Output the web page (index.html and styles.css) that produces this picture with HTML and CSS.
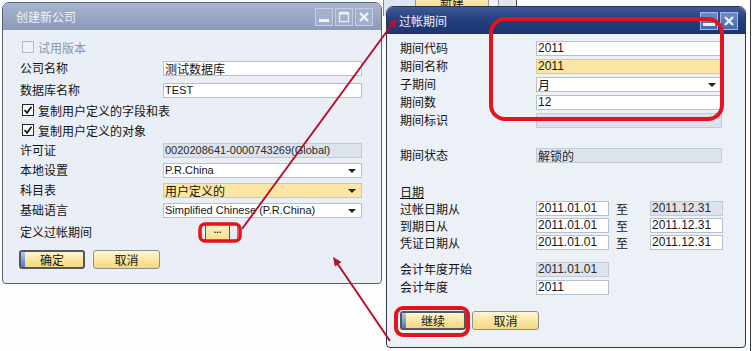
FILE: index.html
```html
<!DOCTYPE html>
<html lang="zh-CN">
<head>
<meta charset="utf-8">
<title>创建新公司 / 过帐期间</title>
<link rel="stylesheet" href="styles.css">
</head>
<body>
<div class="bgwin">
  <div class="bg-btn">新建</div>
  <div class="bg-cell"></div>
</div>
<div class="edge"></div>

<div class="win win-a">
  <div class="tb tb-inactive">
    <span class="tb-title">创建新公司</span>
    <div class="tb-ctrls">
      <span class="cbtn"><svg width="16" height="16" viewBox="0 0 16 16"><rect x="3" y="10" width="10" height="3" fill="#eef2f8"/></svg></span>
      <span class="cbtn"><svg width="16" height="16" viewBox="0 0 16 16"><rect x="3.5" y="3.5" width="9" height="9" fill="none" stroke="#eef2f8" stroke-width="1.2"/><rect x="3" y="3" width="10" height="2.5" fill="#eef2f8"/></svg></span>
      <span class="cbtn"><svg width="16" height="16" viewBox="0 0 16 16"><path d="M4 4 L12 12 M12 4 L4 12" stroke="#eef2f8" stroke-width="2.4"/></svg></span>
    </div>
  </div>
  <div class="wb wb-a">
    <div class="row"><span class="chk chk-dis"></span><span class="dis-txt">试用版本</span></div>
    <div class="row mt1"><span class="lbl">公司名称</span><span class="fld cjk">测试数据库</span></div>
    <div class="row mt2"><span class="lbl">数据库名称</span><span class="fld">TEST</span></div>
    <div class="row"><span class="chk"><svg width="10" height="10" viewBox="0 0 10 10"><path d="M1.5 5 L4 7.8 L8.5 1.8" fill="none" stroke="#111" stroke-width="1.7"/></svg></span><span>复制用户定义的字段和表</span></div>
    <div class="row"><span class="chk"><svg width="10" height="10" viewBox="0 0 10 10"><path d="M1.5 5 L4 7.8 L8.5 1.8" fill="none" stroke="#111" stroke-width="1.7"/></svg></span><span>复制用户定义的对象</span></div>
    <div class="row"><span class="lbl">许可证</span><span class="fld fld-dis">0020208641-0000743269(Global)</span></div>
    <div class="row"><span class="lbl">本地设置</span><span class="fld dd">P.R.China</span></div>
    <div class="row"><span class="lbl">科目表</span><span class="fld fld-y dd cjk">用户定义的</span></div>
    <div class="row"><span class="lbl">基础语言</span><span class="fld dd">Simplified Chinese (P.R.China)</span></div>
    <div class="row mt2"><span class="lbl">定义过帐期间</span><span class="dots"><span class="dots-main">...</span><span class="dots-side"></span></span></div>
    <div class="btns"><span class="btn btn-def">确定</span><span class="btn">取消</span></div>
  </div>
</div>

<div class="win win-b">
  <div class="tb tb-active">
    <span class="tb-title">过帐期间</span>
    <div class="tb-ctrls">
      <span class="cbtn"><svg width="16" height="16" viewBox="0 0 16 16"><rect x="2" y="10" width="12" height="3" fill="#e9f0fb"/></svg></span>
      <span class="cbtn"><svg width="16" height="16" viewBox="0 0 16 16"><path d="M4 4 L12 12 M12 4 L4 12" stroke="#e9f0fb" stroke-width="2.4"/></svg></span>
    </div>
  </div>
  <div class="wb wb-b">
    <div class="rrow"><span class="rlbl">期间代码</span><span class="rfld">2011</span></div>
    <div class="rrow"><span class="rlbl">期间名称</span><span class="rfld fld-y">2011</span></div>
    <div class="rrow"><span class="rlbl">子期间</span><span class="rfld dd cjk">月</span></div>
    <div class="rrow"><span class="rlbl">期间数</span><span class="rfld">12</span></div>
    <div class="rrow"><span class="rlbl">期间标识</span><span class="rfld fld-dis"></span></div>
    <div class="rrow gap-status"><span class="rlbl">期间状态</span><span class="rfld fld-dis cjk">解锁的</span></div>
    <div class="rrow h17 gap-date"><span class="rlbl ul">日期</span></div>
    <div class="rrow h17"><span class="rlbl">过帐日期从</span><span class="rfld short">2011.01.01</span><span class="to">至</span><span class="rfld short fld-dis">2011.12.31</span></div>
    <div class="rrow h17"><span class="rlbl">到期日从</span><span class="rfld short">2011.01.01</span><span class="to">至</span><span class="rfld short">2011.12.31</span></div>
    <div class="rrow h17"><span class="rlbl">凭证日期从</span><span class="rfld short">2011.01.01</span><span class="to">至</span><span class="rfld short">2011.12.31</span></div>
    <div class="rrow gap-fy"><span class="rlbl">会计年度开始</span><span class="rfld short fld-dis">2011.01.01</span></div>
    <div class="rrow"><span class="rlbl">会计年度</span><span class="rfld short">2011</span></div>
    <div class="rbtns"><span class="btn btn-def">继续</span><span class="btn">取消</span></div>
  </div>
</div>

<svg class="annot" width="752" height="351" viewBox="0 0 752 351">
  <rect x="491" y="19" width="231" height="100" rx="14" fill="none" stroke="#e5141c" stroke-width="4"/>
  <rect x="396" y="308" width="72" height="27" rx="7" fill="none" stroke="#e5141c" stroke-width="4"/>
  <rect x="200" y="224" width="40" height="17" rx="5" fill="none" stroke="#e5141c" stroke-width="3.5"/>
  <line x1="242" y1="229" x2="393" y2="23" stroke="#b5102c" stroke-width="2"/>
  <polygon points="397,18 394.9,27.7 388.5,22.9" fill="#b5102c"/>
  <line x1="390" y1="341" x2="337" y2="263" stroke="#b5102c" stroke-width="2"/>
  <polygon points="333,257 341.5,262 334.9,266.6" fill="#b5102c"/>
</svg>
</body>
</html>
```

FILE: styles.css
```css
* { box-sizing: border-box; }

body {
  margin: 0;
  width: 752px;
  height: 351px;
  position: relative;
  overflow: hidden;
  background: #fefdfe;
  font-family: "Noto Sans CJK SC", "Liberation Sans", sans-serif;
  font-size: 12px;
  color: #141414;
}

.edge {
  position: absolute;
  left: 750px;
  top: 0;
  width: 1px;
  height: 351px;
  background: #3a3a3a;
}

.bgwin {
  position: absolute;
  left: 383px;
  top: 0;
  width: 134px;
  height: 16px;
  display: flex;
  align-items: flex-start;
  background: #dfe6ef;
  border-left: 1px solid #7b879c;
  border-right: 1px solid #4a4a4a;
}

.bg-btn {
  margin-left: 31px;
  width: 74px;
  height: 8px;
  overflow: hidden;
  background: linear-gradient(#fbeab0, #f3d98a);
  border: 1px solid #9a9a9a;
  border-top: none;
  text-align: center;
  line-height: 4px;
  font-size: 12px;
}

.bg-cell {
  width: 10px;
  height: 8px;
  border-right: 1px solid #999;
  background: #eef1f5;
}

.win {
  position: absolute;
  display: flex;
  flex-direction: column;
  border-radius: 7px 7px 4px 4px;
  overflow: hidden;
}

.win-a {
  left: 2px;
  top: 2px;
  width: 380px;
  height: 282px;
  border: 1px solid #56627a;
  background: #eaeff7;
}

.win-b {
  left: 386px;
  top: 6px;
  width: 360px;
  height: 342px;
  border: 1px solid #2c3750;
  background: #ecf0f7;
}

.tb {
  height: 27px;
  flex: none;
  display: flex;
  align-items: center;
}

.tb-inactive {
  background: linear-gradient(#a8b5cf, #8b9aba);
  padding-left: 13px;
}

.tb-active {
  background: linear-gradient(#40599a 0%, #26407e 45%, #1c3472 100%);
  padding-left: 12px;
}

.tb-title {
  flex: 1;
  font-size: 12px;
  line-height: 16px;
  color: #eef2f8;
}

.tb-ctrls {
  display: flex;
  gap: 2px;
  margin-right: 8px;
}

.tb-active .tb-ctrls { margin-right: 7px; gap: 2px; }

.cbtn {
  width: 18px;
  height: 18px;
  display: flex;
  align-items: center;
  justify-content: center;
}

.tb-inactive .cbtn {
  background: #a4b0cb;
  border: 1px solid #c6cee0;
}

.tb-active .cbtn {
  background: linear-gradient(#6f8bc9, #4867ab);
  border: 1px solid #a5b9e0;
}

/* left dialog body */
.wb-a { padding: 7px 0 0 17px; }

.row {
  display: flex;
  align-items: center;
  height: 20px;
  white-space: nowrap;
}

.mt1 { margin-top: 1px; }
.mt2 { margin-top: 2px; }

.lbl {
  width: 143px;
  flex: none;
  line-height: 16px;
}

.chk {
  width: 12px;
  height: 12px;
  flex: none;
  margin: 0 4px 0 2px;
  border: 1px solid #262626;
  background: #fff;
  display: flex;
  align-items: center;
  justify-content: center;
}

.chk-dis {
  border-color: #b3bac6;
  background: #eff2f7;
}

.dis-txt { color: #8e949f; }

.fld {
  width: 199px;
  height: 15px;
  flex: none;
  border: 1px solid #b6c0cf;
  background: #fff;
  font: 11px/13px "Liberation Sans", sans-serif;
  padding-left: 1px;
  position: relative;
  overflow: hidden;
}

/* right dialog field base */
.rfld {
  width: 186px;
  height: 15px;
  flex: none;
  border: 1px solid #b6c0cf;
  background: #fff;
  font: 12px/13px "Liberation Sans", sans-serif;
  padding-left: 1px;
  position: relative;
  overflow: hidden;
}

.rfld.short { width: 73px; }

.fld.cjk, .rfld.cjk {
  font: 12px/13px "Noto Sans CJK SC", sans-serif;
}

.fld.fld-dis, .rfld.fld-dis {
  background: #dde3ec;
  border-color: #c2cad6;
  color: #2a2a2a;
}

.fld.fld-y, .rfld.fld-y {
  background: #fbe6a3;
  border-color: #d8cb92;
}

.dd::after {
  content: "";
  position: absolute;
  right: 5px;
  top: 5px;
  border-left: 4px solid transparent;
  border-right: 4px solid transparent;
  border-top: 4px solid #222;
}

.dots {
  margin-left: 42px;
  width: 33px;
  height: 16px;
  display: flex;
  border-left: 1px solid #5a5a5a;
  border-right: 1px solid #8a8a8a;
}

.dots-main {
  width: 24px;
  background: linear-gradient(#fdf0c0, #f8e091);
  border-right: 1px solid #555;
  text-align: center;
  font: bold 9px/12px "Liberation Sans", sans-serif;
  color: #222;
}

.dots-side {
  flex: 1;
  background: #e6ebf2;
}

.btns {
  display: flex;
  gap: 8px;
  margin-top: 8px;
  margin-left: -1px;
}

.btn {
  width: 67px;
  height: 19px;
  border: 1px solid #8e8e8e;
  border-radius: 3px;
  background: linear-gradient(#fff7d6 0%, #fbe8a8 45%, #f3d781 100%);
  text-align: center;
  line-height: 17px;
  font-size: 12px;
  position: relative;
}

.btn-def {
  width: 66px;
  border: 2px solid #53575e;
  line-height: 15px;
}

.btn-def::before {
  content: "";
  position: absolute;
  left: 0;
  top: 0;
  bottom: 0;
  width: 4px;
  background: linear-gradient(#b4cbef, #4f77c2);
}

/* right dialog body */
.wb-b { padding: 5px 0 0 13px; }

.rrow {
  display: flex;
  align-items: center;
  height: 18px;
  white-space: nowrap;
}

.rrow.h17 { height: 17px; }
.gap-status { margin-top: 17px; }
.gap-date { margin-top: 19px; }
.gap-fy { margin-top: 9px; }

.rlbl {
  width: 136px;
  flex: none;
  line-height: 16px;
}

.ul { text-decoration: underline; }

.to {
  width: 41px;
  flex: none;
  padding-left: 7px;
  line-height: 16px;
}

.rbtns {
  display: flex;
  gap: 6px;
  margin-top: 15px;
}

.annot {
  position: absolute;
  left: 0;
  top: 0;
  pointer-events: none;
}
```
